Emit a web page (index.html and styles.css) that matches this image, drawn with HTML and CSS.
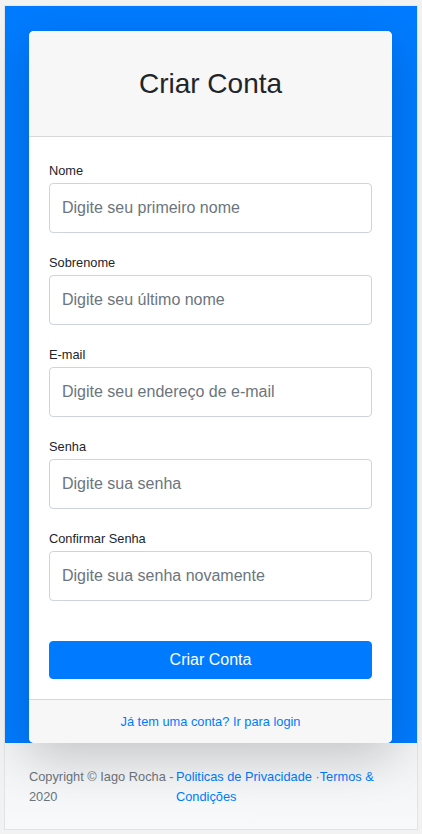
FILE: index.html
```html
<!DOCTYPE html>
<html lang="pt-BR">
<head>
<meta charset="utf-8">
<title>Criar Conta</title>
<link rel="stylesheet" href="styles.css">
</head>
<body>
<div class="page">
  <main class="hero">
    <div class="card">
      <div class="card-header">
        <h3 class="card-title">Criar Conta</h3>
      </div>
      <form class="card-body">
        <div class="form-group">
          <label class="label" for="nome">Nome</label>
          <input class="input" id="nome" type="text" placeholder="Digite seu primeiro nome">
        </div>
        <div class="form-group">
          <label class="label" for="sobrenome">Sobrenome</label>
          <input class="input" id="sobrenome" type="text" placeholder="Digite seu último nome">
        </div>
        <div class="form-group">
          <label class="label" for="email">E-mail</label>
          <input class="input" id="email" type="email" placeholder="Digite seu endereço de e-mail">
        </div>
        <div class="form-group">
          <label class="label" for="senha">Senha</label>
          <input class="input" id="senha" type="password" placeholder="Digite sua senha">
        </div>
        <div class="form-group">
          <label class="label" for="confirmar">Confirmar Senha</label>
          <input class="input" id="confirmar" type="password" placeholder="Digite sua senha novamente">
        </div>
        <button class="btn" type="button">Criar Conta</button>
      </form>
      <div class="card-footer">
        <a class="link" href="#">Já tem uma conta? Ir para login</a>
      </div>
    </div>
  </main>
  <footer class="footer">
    <div class="copyright">Copyright © Iago Rocha - 2020</div>
    <div class="footer-links"><a class="link" href="#">Politicas de Privacidade</a> ·<a class="link" href="#">Termos &amp; Condições</a></div>
  </footer>
</div>
</body>
</html>
```

FILE: styles.css
```css
* { box-sizing: border-box; }

html, body {
  margin: 0;
  padding: 0;
}

body {
  background: #f2f2f2;
  font-family: "Liberation Sans", Arial, sans-serif;
  color: #212529;
  padding: 5px 4px 4px 4px;
}

.page {
  border: 1px solid #e2e3e5;
  border-top-color: #e8e8e8;
  background: #f8f9fa;
}

.hero {
  background: #007bff;
  padding: 25px 25px 0 24px;
}

.card {
  background: #fff;
  border-radius: 5px;
  box-shadow: 0 1rem 3rem rgba(0, 0, 0, 0.175);
  position: relative;
  z-index: 1;
}

.card-header {
  background: #f7f7f7;
  border-bottom: 1px solid rgba(0, 0, 0, 0.125);
  border-radius: 5px 5px 0 0;
  padding: 36px 0 35px;
  text-align: center;
}

.card-title {
  margin: 0;
  font-size: 28px;
  font-weight: 400;
  line-height: 34px;
  color: #212529;
}

.card-body {
  margin: 0;
  padding: 24px 20px 20px;
  display: flex;
  flex-direction: column;
}

.form-group {
  display: flex;
  flex-direction: column;
  margin-bottom: 20px;
}

.label {
  font-size: 12.8px;
  line-height: 19px;
  margin-bottom: 3px;
  color: #212529;
}

.input {
  height: 50px;
  padding: 12px;
  font-family: inherit;
  font-size: 16px;
  line-height: 24px;
  border: 1px solid #ced4da;
  border-radius: 4px;
  background: #fff;
  color: #495057;
}

.input::placeholder {
  color: #6c757d;
  opacity: 1;
}

.btn {
  margin-top: 20px;
  height: 38px;
  border: 1px solid #007bff;
  border-radius: 4px;
  background: #007bff;
  color: #fff;
  font-family: inherit;
  font-size: 16px;
  line-height: 24px;
  padding: 6px 12px;
}

.card-footer {
  background: #f7f7f7;
  border-top: 1px solid rgba(0, 0, 0, 0.125);
  border-radius: 0 0 5px 5px;
  padding: 12px 20px 12px;
  text-align: center;
  font-size: 12.8px;
  line-height: 19px;
}

.link {
  color: #007bff;
  text-decoration: none;
}

.footer {
  display: flex;
  padding: 24px 24px 23px;
  font-size: 12.8px;
  line-height: 19.5px;
  color: #6c757d;
  background: linear-gradient(#f1f2f4, #f8f9fa);
}

.copyright {
  width: 147px;
  flex: none;
}

.footer-links {
  flex: 1;
}
```
